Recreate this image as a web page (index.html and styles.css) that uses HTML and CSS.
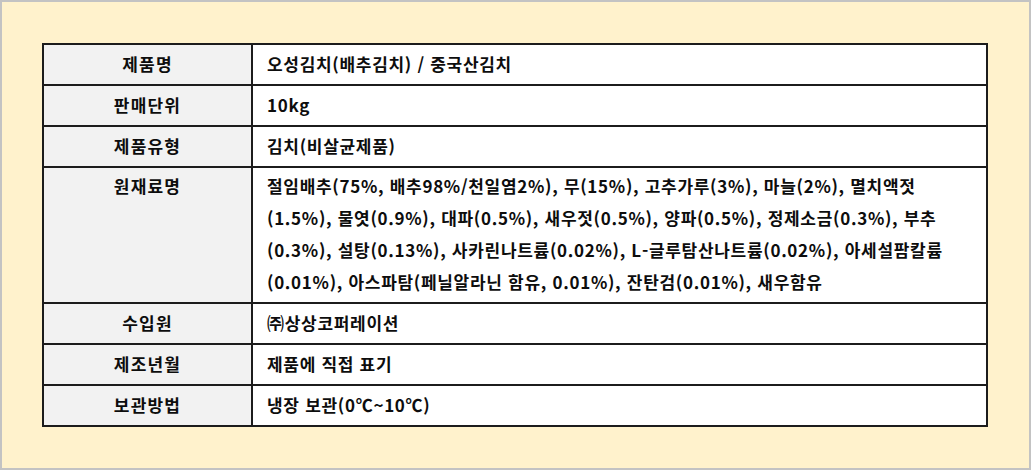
FILE: index.html
```html
<!DOCTYPE html>
<html lang="ko">
<head>
<meta charset="utf-8">
<link rel="stylesheet" href="styles.css">
</head>
<body>
<div class="frame">
  <table class="info">
    <tr class="r41"><th>제품명</th><td>오성김치(배추김치) / 중국산김치</td></tr>
    <tr class="r41"><th>판매단위</th><td>10kg</td></tr>
    <tr class="r41"><th>제품유형</th><td>김치(비살균제품)</td></tr>
    <tr class="rtall"><th class="top">원재료명</th><td class="multi">절임배추(75%, 배추98%/천일염2%), 무(15%), 고추가루(3%), 마늘(2%), 멸치액젓<br>(1.5%), 물엿(0.9%), 대파(0.5%), 새우젓(0.5%), 양파(0.5%), 정제소금(0.3%), 부추<br>(0.3%), 설탕(0.13%), 사카린나트륨(0.02%), L-글루탐산나트륨(0.02%), 아세설팜칼륨<br>(0.01%), 아스파탐(페닐알라닌 함유, 0.01%), 잔탄검(0.01%), 새우함유</td></tr>
    <tr class="r41"><th>수입원</th><td>㈜상상코퍼레이션</td></tr>
    <tr class="r41"><th>제조년월</th><td>제품에 직접 표기</td></tr>
    <tr class="r41"><th>보관방법</th><td>냉장 보관(0℃~10℃)</td></tr>
  </table>
</div>
</body>
</html>
```
FILE: styles.css
```css
html, body {
  margin: 0;
  padding: 0;
}
body {
  width: 1031px;
  height: 470px;
  font-family: "Noto Sans CJK KR", "Noto Sans", sans-serif;
  color: #0d0d0d;
}
.frame {
  box-sizing: border-box;
  width: 1031px;
  height: 470px;
  background: #fff2cc;
  border: 2px solid #c3c3c3;
  padding: 41px 41px 0 40px;
}
.info {
  border-collapse: collapse;
  width: 946px;
  border: 2px solid #1c1c1c;
}
.info th, .info td {
  border: 2px solid #1c1c1c;
  font-size: 17px;
  font-weight: 700;
  line-height: 20px;
  letter-spacing: 0.7px;
}
.info th {
  width: 207px;
  background: #f2f2f2;
  text-align: center;
  letter-spacing: 1.2px;
  padding: 0 0 2px;
}
.info td {
  background: #fff;
  text-align: left;
  padding: 0 0 2px 14px;
}
.r41 { height: 41px; }
.info th.top {
  vertical-align: top;
  padding-top: 8px;
}
.info td.multi {
  line-height: 32px;
  padding-top: 2px;
  padding-bottom: 4px;
}
```
